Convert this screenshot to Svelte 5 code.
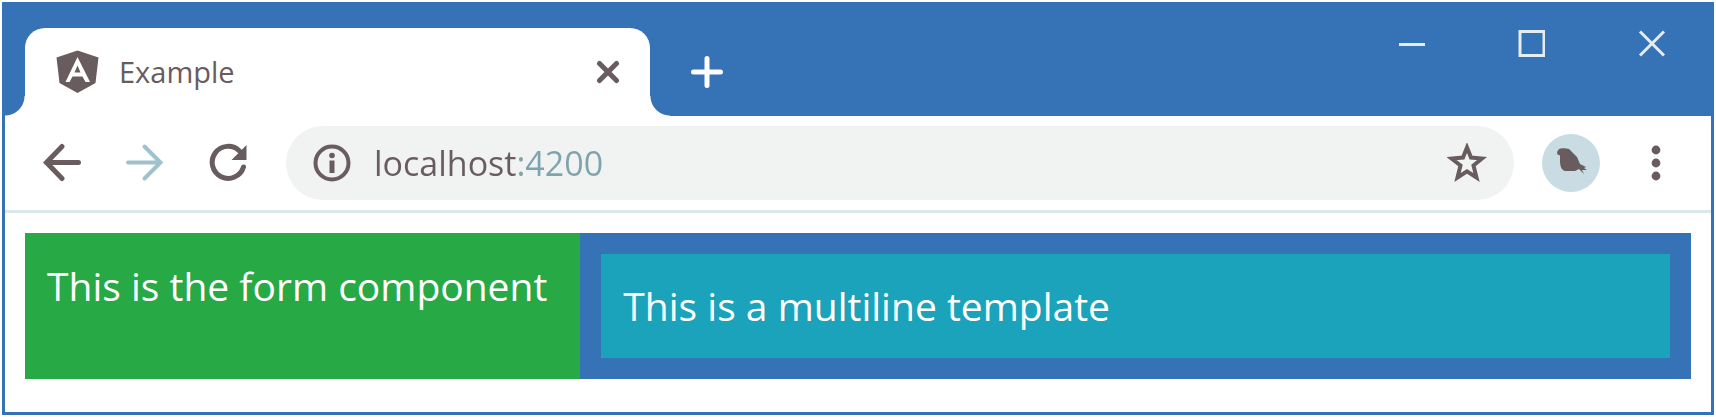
<script>
  let address = $state('localhost:4200');
</script>

<div class="window">
  <header class="titlebar">
    <div class="tab">
      <svg class="favicon" width="44" height="44" viewBox="0 0 44 44" aria-hidden="true">
        <path d="M21.500 0.500 42.500 7.500 39.500 33 21.500 43 3.500 33 0.500 7.500Z" fill="#695c5e" />
        <path d="M21.500 7 34 32H29.500L26.500 26.500H16.500L13.500 32H9.500ZM21.500 15.500 18.500 22.500H24.500Z" fill="#fff" fill-rule="evenodd" />
      </svg>
      <span class="title">Example</span>
      <button class="tab-close" aria-label="Close tab">
        <svg width="24" height="24" viewBox="0 0 24 24"><path d="M3.500 3.500 20.500 20.500M20.500 3.500 3.500 20.500" /></svg>
      </button>
    </div>
    <button class="new-tab" aria-label="New tab">
      <svg width="32" height="32" viewBox="0 0 32 32"><path d="M16 2.500V29.500M2.500 16H29.500" /></svg>
    </button>
    <div class="controls">
      <button aria-label="Minimize">
        <svg width="28" height="28" viewBox="0 0 28 28"><path d="M2 14.500H28" /></svg>
      </button>
      <button aria-label="Maximize">
        <svg width="28" height="28" viewBox="0 0 28 28"><path d="M3 1.500H27V25.500H3Z" /></svg>
      </button>
      <button aria-label="Close window">
        <svg width="28" height="28" viewBox="0 0 28 28"><path d="M3 1.500 27 25.500M27 1.500 3 25.500" /></svg>
      </button>
    </div>
  </header>

  <nav class="toolbar">
    <button class="nav" aria-label="Back">
      <svg width="40" height="40" viewBox="0 0 40 40"><path d="M19 3.500 3.500 19.500 19 35.500M3.500 19.500H35.500" /></svg>
    </button>
    <button class="nav forward" aria-label="Forward">
      <svg width="40" height="40" viewBox="0 0 40 40"><path d="M18.500 3.500 34.500 19.500 18.500 35.500M34.500 19.500H2" /></svg>
    </button>
    <button class="nav" aria-label="Reload">
      <svg width="40" height="40" viewBox="0 0 40 40">
        <path d="M34.500 24A16 16 0 1 1 30.500 8" />
        <path d="M37.500 2V17H22.500Z" fill="#695c5e" stroke="none" />
      </svg>
    </button>
    <div class="omnibox">
      <button class="inner" aria-label="Site information">
        <svg width="38" height="38" viewBox="0 0 38 38">
          <circle cx="19" cy="19" r="16.500" />
          <path d="M19 16.500V29" stroke-width="5" />
          <circle cx="19" cy="11.500" r="2.800" fill="#695c5e" stroke="none" />
        </svg>
      </button>
      <input type="text" aria-label="Address" spellcheck="false" bind:value={address} />
      <button class="inner" aria-label="Bookmark this page">
        <svg width="40" height="40" viewBox="0 0 40 40">
          <path d="M20 4.500 24 14.500 35 15.500 26.500 22.500 29.500 34.500 20 28.300 10.500 34.500 13.500 22.500 4.500 15.500 16 14.500Z" />
        </svg>
      </button>
    </div>
    <button class="avatar" aria-label="Profile">
      <svg width="58" height="58" viewBox="0 0 58 58">
        <path d="M15 18 17 15C19 14 24 14 27 15L35 23 38 30 44 33 42 34 45 36 40 36 42 40 37 35 33 37H23C19 36 18 31 18 27V21.500L15.500 20.500Z" fill="#695c5e" />
      </svg>
    </button>
    <button class="nav" aria-label="Menu">
      <svg width="10" height="36" viewBox="0 0 10 36" class="dots">
        <circle cx="5" cy="5" r="4.400" /><circle cx="5" cy="18" r="4.400" /><circle cx="5" cy="31" r="4.400" />
      </svg>
    </button>
  </nav>

  <main>
    <div class="row">
      <section class="form">This is the form component</section>
      <section class="side"><div class="template">This is a multiline template</div></section>
    </div>
  </main>
</div>

<style>
  :global(body) {
    margin: 0;
    background: #fff;
  }
  .window {
    box-sizing: border-box;
    margin: 2px;
    border: 3px solid #3572b6;
    background: #fff;
    font-family: "Open Sans", "Noto Sans", sans-serif;
    color: #695c5e;
  }
  button {
    display: flex;
    align-items: center;
    justify-content: center;
    flex: none;
    padding: 0;
    border: 0;
    background: none;
    color: inherit;
    cursor: pointer;
  }
  svg {
    display: block;
    flex: none;
    fill: none;
    stroke: #695c5e;
    stroke-width: 4;
  }
  .titlebar {
    display: flex;
    align-items: flex-end;
    height: 111px;
    padding-left: 20px;
    background: #3572b6;
  }
  .tab {
    position: relative;
    box-sizing: border-box;
    display: flex;
    align-items: center;
    flex: 0 1 625px;
    height: 88px;
    padding: 0 18px 0 31px;
    border-radius: 20px 20px 0 0;
    background: #fff;
  }
  .tab::before,
  .tab::after {
    content: "";
    position: absolute;
    bottom: 0;
    width: 20px;
    height: 20px;
  }
  .tab::before {
    right: 100%;
    background: radial-gradient(circle at 0 0, transparent 19px, #fff 20px);
  }
  .tab::after {
    left: 100%;
    background: radial-gradient(circle at 100% 0, transparent 19px, #fff 20px);
  }
  .favicon {
    stroke: none;
  }
  .title {
    flex: 1;
    margin-left: 19px;
    font-size: 29px;
    line-height: 40px;
  }
  .tab-close {
    width: 48px;
    height: 48px;
  }
  .tab-close svg {
    stroke-width: 5;
    stroke-linecap: round;
  }
  .new-tab {
    width: 56px;
    height: 88px;
    margin-left: 29px;
  }
  .new-tab svg {
    stroke: #fff;
    stroke-width: 5;
    stroke-linecap: round;
  }
  .controls {
    display: flex;
    align-self: flex-start;
    margin-left: auto;
  }
  .controls button {
    width: 120px;
    height: 78px;
  }
  .controls svg {
    stroke: #e3edf2;
    stroke-width: 3;
  }
  .toolbar {
    display: flex;
    align-items: center;
    height: 94px;
    padding: 0 14px 0 16px;
    border-bottom: 3px solid #dce7ed;
  }
  .nav {
    width: 83px;
    height: 72px;
  }
  .nav svg {
    stroke-width: 5;
    stroke-linecap: round;
  }
  .forward svg {
    stroke: #9fc2cc;
    stroke-width: 4;
  }
  .omnibox {
    display: flex;
    align-items: center;
    flex: 1;
    min-width: 0;
    height: 74px;
    margin: 0 28px 0 16px;
    padding: 0 19px 0 18px;
    box-sizing: border-box;
    border-radius: 37px;
    background: #f1f3f3;
  }
  .inner {
    width: 56px;
    height: 56px;
  }
  input {
    flex: 1;
    min-width: 0;
    margin-left: 14px;
    padding: 0;
    border: 0;
    outline: 0;
    background: linear-gradient(90deg, #695c5e 144px, #7ea3ac 144px);
    background-clip: text;
    color: transparent;
    caret-color: #695c5e;
    font: 34px/48px "Open Sans", "Noto Sans", sans-serif;
  }
  .avatar {
    width: 58px;
    height: 58px;
    margin-right: 14px;
    border-radius: 50%;
    background: #c9dce4;
  }
  .avatar svg {
    stroke: none;
  }
  svg.dots {
    fill: #695c5e;
    stroke: none;
  }
  main {
    padding: 20px 20px 33px;
  }
  .row {
    display: grid;
    grid-template-columns: 1fr 2fr;
    color: #fff;
    font-size: 39px;
    line-height: 64px;
  }
  .form {
    padding: 21px 22px;
    background: #27a946;
  }
  .side {
    padding: 21px;
    background: #3572b6;
  }
  .template {
    padding: 20px 22px;
    background: #1aa3ba;
  }
</style>
